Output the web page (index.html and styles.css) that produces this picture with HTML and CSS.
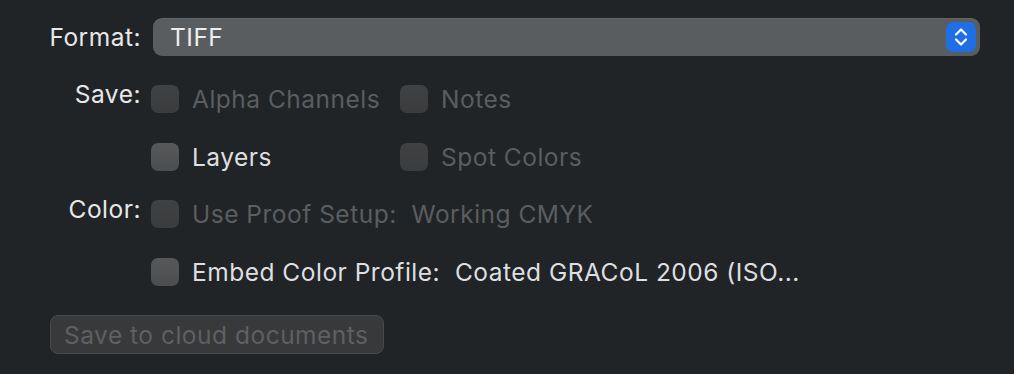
FILE: index.html
```html
<!DOCTYPE html>
<html lang="en">
<head>
    <meta charset="UTF-8" />
    <title>Save As Options</title>
    <link rel="stylesheet" href="styles.css">
</head>
<body>

    <div class="sheet">
        <!-- Format -->
        <div class="label label-format">Format:</div>
        <div class="popup">
            <span class="popup-value">TIFF</span>
            <span class="stepper">
                <svg width="30" height="30" viewBox="0 0 30 30">
                    <path d="M10 12.5 L15 7.5 L20 12.5" fill="none" stroke="#fff" stroke-width="2.2" stroke-linecap="round" stroke-linejoin="round"/>
                    <path d="M10 17.5 L15 22.5 L20 17.5" fill="none" stroke="#fff" stroke-width="2.2" stroke-linecap="round" stroke-linejoin="round"/>
                </svg>
            </span>
        </div>

        <!-- Save -->
        <div class="label">Save:</div>
        <div class="options">
            <label class="check disabled"><span class="box"></span>Alpha Channels</label>
            <label class="check disabled"><span class="box"></span>Notes</label>
            <label class="check"><span class="box"></span>Layers</label>
            <label class="check disabled"><span class="box"></span>Spot Colors</label>
        </div>

        <!-- Color -->
        <div class="label">Color:</div>
        <div class="options single">
            <label class="check disabled"><span class="box"></span>Use Proof Setup:&nbsp; Working CMYK</label>
            <label class="check"><span class="box"></span>Embed Color Profile:&nbsp; Coated GRACoL 2006 (ISO...</label>
        </div>
    </div>

    <button type="button" class="cloud-btn" disabled>Save to cloud documents</button>

</body>
</html>
```

FILE: styles.css
```css
* {
    margin: 0;
    padding: 0;
    box-sizing: border-box;
}

body {
    background: #202426;
    font-family: "Inter", "Noto Sans", sans-serif;
    font-size: 24.5px;
    letter-spacing: 0.5px;
    color: #dedfe0;
    width: 1014px;
    height: 374px;
    overflow: hidden;
}

.sheet {
    display: grid;
    grid-template-columns: 133px 1fr;
    column-gap: 10px;
    row-gap: 29px;
    padding: 18px 34px 0 8px;
}

.label {
    text-align: right;
    line-height: 28px;
    margin-top: -5px;
    color: #e8e8e9;
}

.label-format {
    margin-top: 0;
    line-height: 38px;
}

/* Popup button */
.popup {
    margin-left: 2px;
    height: 38px;
    background: #5a5d5f;
    border-radius: 9px;
    display: flex;
    align-items: center;
    justify-content: space-between;
    padding: 0 4px 0 17px;
    box-shadow: inset 0 1px 0 rgba(255,255,255,0.06);
}

.popup-value {
    color: #eeeeee;
    margin-top: -1px;
}

.stepper {
    width: 30px;
    height: 30px;
    background: #1f6ee4;
    border-radius: 7px;
    display: flex;
}

/* Checkbox grid */
.options {
    display: grid;
    grid-template-columns: 249px auto;
    row-gap: 30px;
    justify-content: start;
}

.options.single {
    grid-template-columns: auto;
}

.check {
    display: flex;
    align-items: center;
    gap: 13px;
    height: 28px;
    white-space: nowrap;
}

.box {
    width: 28px;
    height: 28px;
    border-radius: 7px;
    background: linear-gradient(#56585a, #4b4d4f);
    flex: none;
}

.check.disabled {
    color: #5b5d5f;
}

.check.disabled .box {
    background: linear-gradient(#3f4143, #3a3c3e);
}

.cloud-btn {
    display: block;
    margin: 29px 0 0 50px;
    width: 334px;
    height: 39px;
    border: 1px solid #48494b;
    border-radius: 8px;
    background: #38393b;
    color: #5e6062;
    font-family: inherit;
    font-size: 24.5px;
    letter-spacing: 0.5px;
    text-align: left;
    padding-left: 13px;
}
```
